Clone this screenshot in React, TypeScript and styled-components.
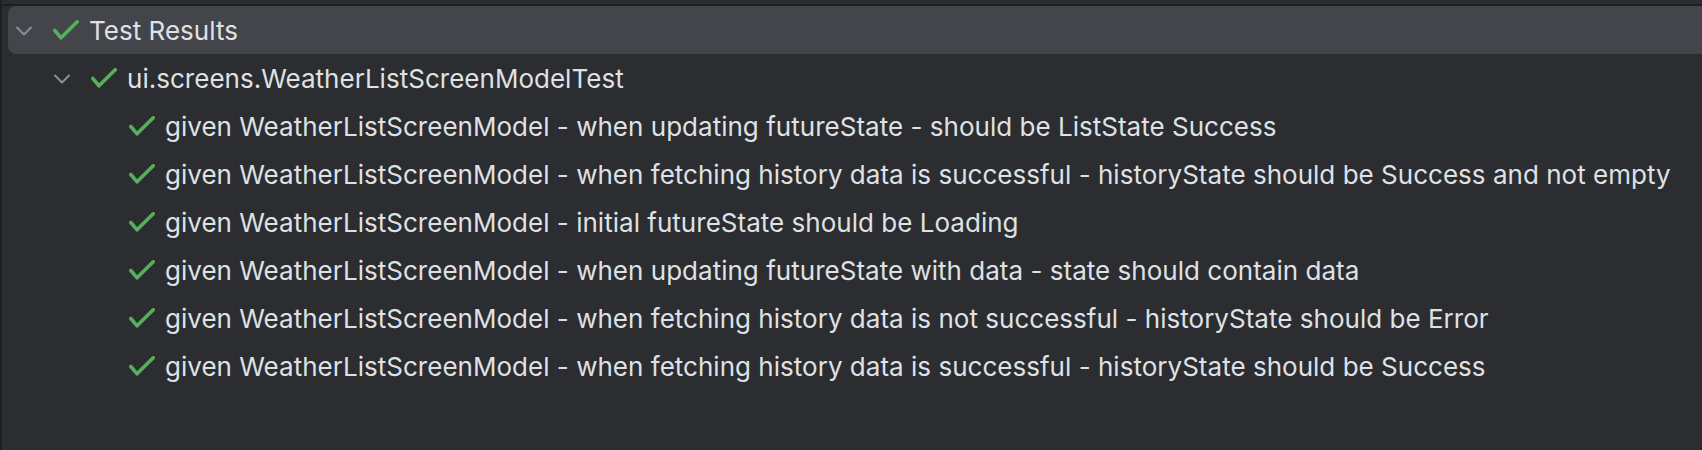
import React from "react";
import styled, { createGlobalStyle } from "styled-components";

const GlobalStyle = createGlobalStyle`
  html, body {
    margin: 0;
    padding: 0;
    background: #2b2d30;
  }
  body {
    font-family: Inter, "Noto Sans", sans-serif;
    -webkit-font-smoothing: antialiased;
  }
`;

// panel frame
const Panel = styled.div`
  height: 450px;
  overflow: hidden;
  background: #2b2d30;
  border-left: 2px solid #1e1f22;
  box-sizing: border-box;
`;
const TopStrip = styled.div`
  height: 4px;
  background: #2b2d30;
`;
const Divider = styled.div`
  height: 2px;
  background: #1e1f22;
`;
const Tree = styled.div`
  display: flex;
  flex-direction: column;
  padding-left: 6px;
  margin-right: -10px;
`;
const Row = styled.div<{ $depth: number; $selected?: boolean }>`
  display: flex;
  align-items: center;
  height: 48px;
  padding-left: ${(p) => 8 + p.$depth * 38}px;
  border-radius: 8px;
  background: ${(p) => (p.$selected ? "#43454a" : "transparent")};
`;
const Toggle = styled.span`
  display: flex;
  align-items: center;
  width: 16px;
  height: 48px;
  margin-right: 21px;
  flex-shrink: 0;
`;
const Status = styled.span`
  display: flex;
  align-items: center;
  width: 26px;
  margin-right: 10px;
  flex-shrink: 0;
`;
const Label = styled.span`
  font-size: 26px;
  line-height: 48px;
  letter-spacing: 0.02px;
  color: #dfe1e5;
  white-space: nowrap;
  margin-top: 1px;
`;

const Chevron = () => (
  <svg width="16" height="10" viewBox="0 0 16 10" style={{ marginTop: 1 }}>
    <path d="M1 1.5 L8 8.5 L15 1.5" fill="none" stroke="#8c8f94" strokeWidth="2" strokeLinecap="round" strokeLinejoin="round" />
  </svg>
);

const Check = () => (
  <svg width="26" height="20" viewBox="0 0 26 20">
    <path d="M1.8 10.5 L8 17.8 L24.2 1.8" fill="none" stroke="#5aad60" strokeWidth="3.6" strokeLinecap="round" strokeLinejoin="round" />
  </svg>
);

type Node = { label: string; children?: Node[] };

const prefix = "given WeatherListScreenModel - ";
const tests = [
  "when updating futureState - should be ListState Success",
  "when fetching history data is successful - historyState should be Success and not empty",
  "initial futureState should be Loading",
  "when updating futureState with data - state should contain data",
  "when fetching history data is not successful - historyState should be Error",
  "when fetching history data is successful - historyState should be Success",
];

const root: Node = {
  label: "Test Results",
  children: [
    {
      label: "ui.screens.WeatherListScreenModelTest",
      children: tests.map((t) => ({ label: prefix + t })),
    },
  ],
};

const TreeNode = ({ node, depth }: { node: Node; depth: number }) => (
  <>
    <Row $depth={depth} $selected={depth === 0}>
      <Toggle>{node.children && <Chevron />}</Toggle>
      <Status>
        <Check />
      </Status>
      <Label>{node.label}</Label>
    </Row>
    {node.children?.map((c) => (
      <TreeNode key={c.label} node={c} depth={depth + 1} />
    ))}
  </>
);

export default function App() {
  return (
    <>
      <GlobalStyle />
      <Panel>
        <TopStrip />
        <Divider />
        <Tree>
          <TreeNode node={root} depth={0} />
        </Tree>
      </Panel>
    </>
  );
}
